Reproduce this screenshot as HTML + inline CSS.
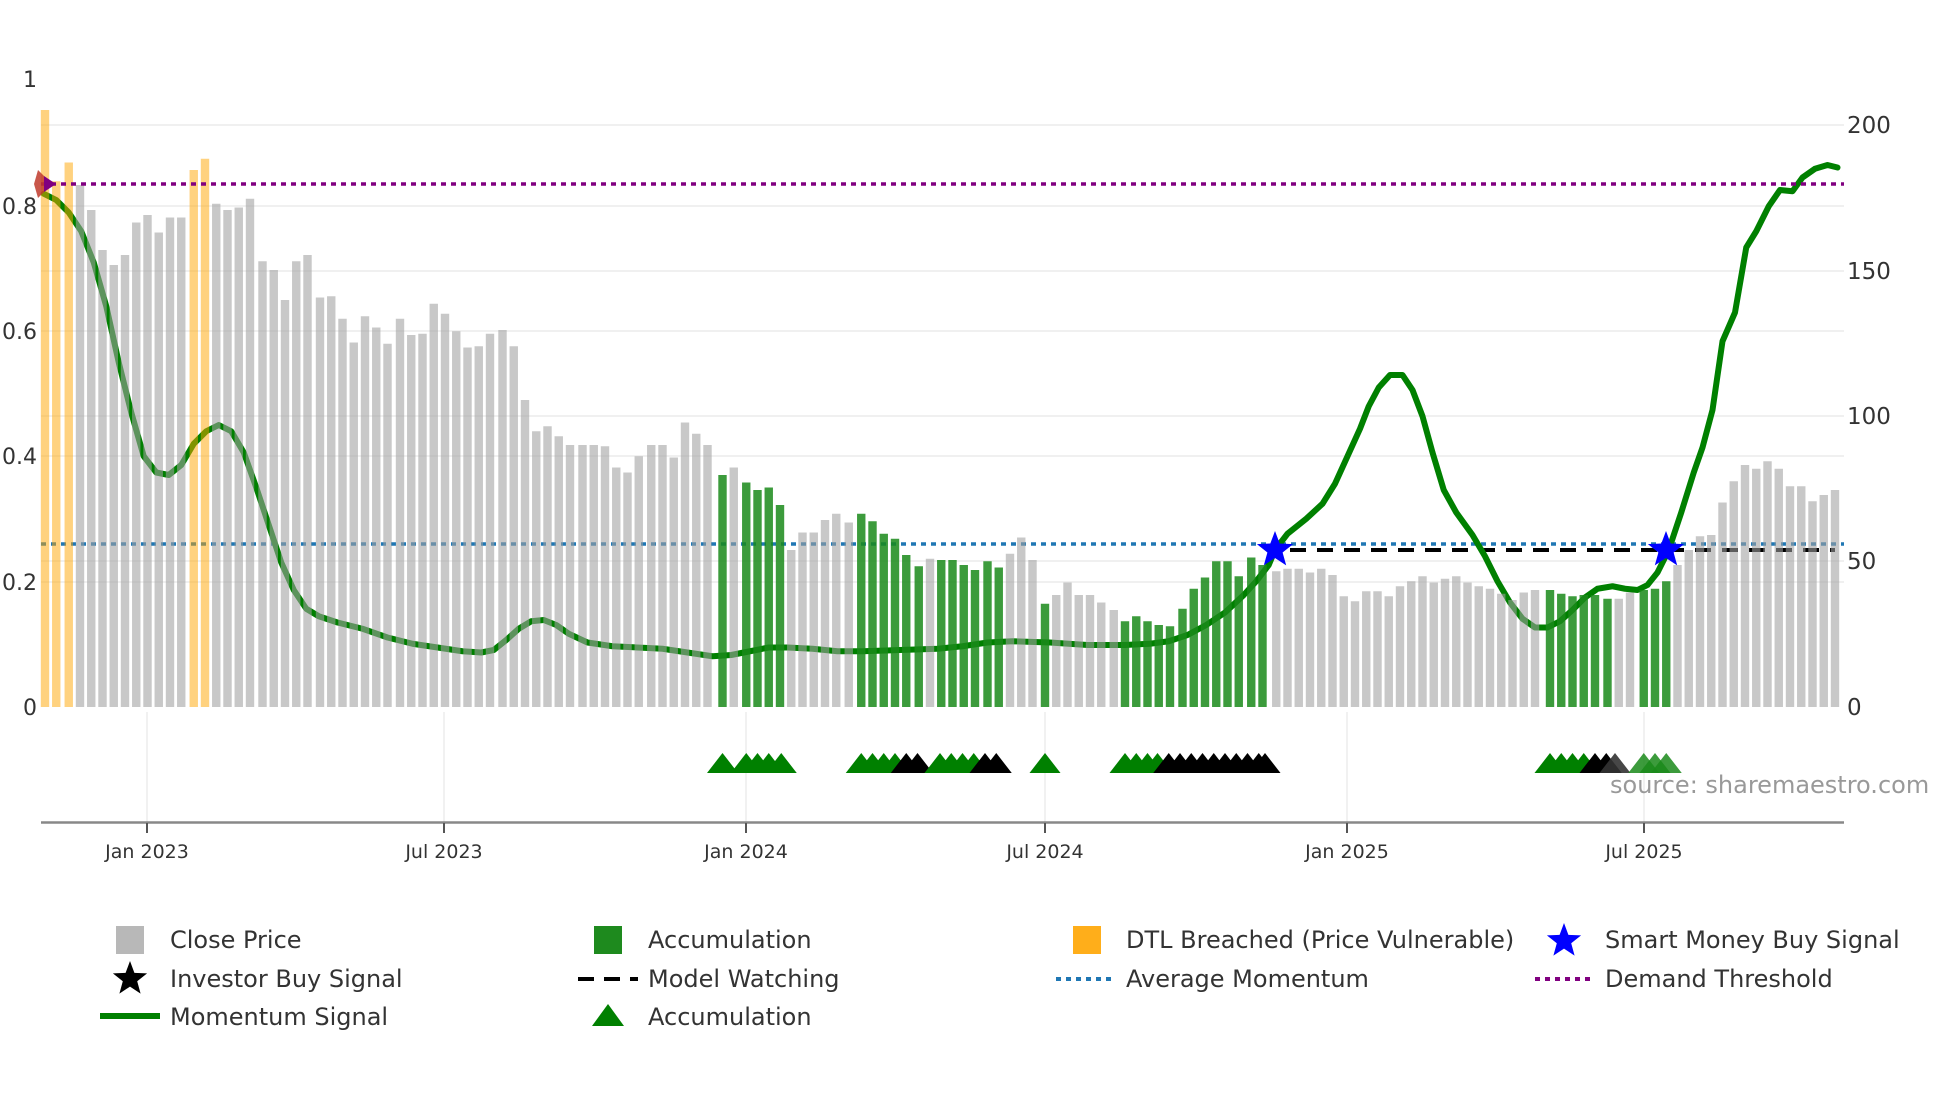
<!DOCTYPE html>
<html><head><meta charset="utf-8">
<style>
html,body{margin:0;padding:0;background:#fff;}
body{width:1960px;height:1102px;overflow:hidden;font-family:"DejaVu Sans","Liberation Sans",sans-serif;}
svg text{font-family:"DejaVu Sans","Liberation Sans",sans-serif;}
</style></head>
<body>
<svg id="s" width="1960" height="1102" viewBox="0 0 1960 1102" xmlns="http://www.w3.org/2000/svg">
<g stroke="#ececec" stroke-width="1.5">
<line x1="41" x2="1844" y1="206" y2="206"/><line x1="41" x2="1844" y1="331" y2="331"/>
<line x1="41" x2="1844" y1="456" y2="456"/><line x1="41" x2="1844" y1="582" y2="582"/>
<line x1="41" x2="1844" y1="125" y2="125"/><line x1="41" x2="1844" y1="271" y2="271"/>
<line x1="41" x2="1844" y1="416" y2="416"/><line x1="41" x2="1844" y1="561" y2="561"/>
<line x1="147" x2="147" y1="712" y2="822"/><line x1="444" x2="444" y1="712" y2="822"/>
<line x1="746" x2="746" y1="712" y2="822"/><line x1="1045" x2="1045" y1="712" y2="822"/>
<line x1="1347" x2="1347" y1="712" y2="822"/><line x1="1644" x2="1644" y1="712" y2="822"/>
</g>
<line x1="41" x2="1844" y1="544" y2="544" stroke="#1f77b4" stroke-width="3.5" stroke-dasharray="5,5"/>
<line x1="1290" x2="1835" y1="550" y2="550" stroke="#000" stroke-width="4" stroke-dasharray="16,11"/>
<g id="line"></g>
<g id="bars"></g>
<line x1="41" x2="1844" y1="184" y2="184" stroke="#800080" stroke-width="3.5" stroke-dasharray="5,5"/>
<g id="tri"></g>
<path d="M38 170 L46 178 L52 184 L46 190 L38 198 L34 184 Z" fill="#c0392b" opacity="0.85"/>
<path d="M44 176 L56 184 L44 192 Z" fill="#800080"/>
<g id="stars"></g>
<line x1="41" x2="1844" y1="822.5" y2="822.5" stroke="#888" stroke-width="2.5"/>
<g stroke="#555" stroke-width="2">
<line x1="147" x2="147" y1="823" y2="833"/><line x1="444" x2="444" y1="823" y2="833"/>
<line x1="746" x2="746" y1="823" y2="833"/><line x1="1045" x2="1045" y1="823" y2="833"/>
<line x1="1347" x2="1347" y1="823" y2="833"/><line x1="1644" x2="1644" y1="823" y2="833"/>
</g>
<g font-size="19" fill="#333" text-anchor="middle">
<text x="147" y="858">Jan 2023</text><text x="444" y="858">Jul 2023</text>
<text x="746" y="858">Jan 2024</text><text x="1045" y="858">Jul 2024</text>
<text x="1347" y="858">Jan 2025</text><text x="1644" y="858">Jul 2025</text>
</g>
<g font-size="22" fill="#333" text-anchor="end">
<text x="37" y="87">1</text><text x="37" y="214">0.8</text><text x="37" y="339">0.6</text>
<text x="37" y="464">0.4</text><text x="37" y="590">0.2</text><text x="37" y="715">0</text>
</g>
<g font-size="23" fill="#333">
<text x="1847" y="133">200</text><text x="1847" y="279">150</text><text x="1847" y="424">100</text>
<text x="1847" y="569">50</text><text x="1847" y="715">0</text>
</g>
<text x="1610" y="793" font-size="24" fill="#999">source: sharemaestro.com</text>
<!-- legend -->
<g font-size="24" fill="#333">
<rect x="116" y="926" width="28" height="28" fill="#b8b8b8"/><text x="170" y="948">Close Price</text>
<rect x="594" y="926" width="28" height="28" fill="#1e8a1e"/><text x="648" y="948">Accumulation</text>
<rect x="1073" y="926" width="28" height="28" fill="#ffae1a"/><text x="1126" y="948">DTL Breached (Price Vulnerable)</text>
<text x="1605" y="948">Smart Money Buy Signal</text>
<text x="170" y="987">Investor Buy Signal</text>
<line x1="578" x2="638" y1="979" y2="979" stroke="#000" stroke-width="4" stroke-dasharray="16,10"/><text x="648" y="987">Model Watching</text>
<line x1="1056" x2="1112" y1="979" y2="979" stroke="#1f77b4" stroke-width="4" stroke-dasharray="5,5"/><text x="1126" y="987">Average Momentum</text>
<line x1="1535" x2="1592" y1="979" y2="979" stroke="#800080" stroke-width="4" stroke-dasharray="5,5"/><text x="1605" y="987">Demand Threshold</text>
<line x1="100" x2="160" y1="1016" y2="1016" stroke="#008000" stroke-width="6"/><text x="170" y="1025">Momentum Signal</text>
<path d="M592 1026 L608 1004 L624 1026 Z" fill="#008000"/><text x="648" y="1025">Accumulation</text>
</g>
<g id="lstars"></g>
</svg>
<script>
var NS="http://www.w3.org/2000/svg";
function el(t,a,p){var e=document.createElementNS(NS,t);for(var k in a)e.setAttribute(k,a[k]);document.getElementById(p).appendChild(e);return e;}
var B=[[36,88,'o'],[45,145,'o'],[55,130,'o'],[64,148,'g'],[73,168,'g'],[82,200,'g'],[91,212,'g'],[100,204,'g'],[109,178,'g'],[118,172,'g'],[127,186,'g'],[136,174,'g'],[145,174,'g'],[155,136,'o'],[164,127,'o'],[173,163,'g'],[182,168,'g'],[191,166,'g'],[200,159,'g'],[210,209,'g'],[219,216,'g'],[228,240,'g'],[237,209,'g'],[246,204,'g'],[256,238,'g'],[265,237,'g'],[274,255,'g'],[283,274,'g'],[292,253,'g'],[301,262,'g'],[310,275,'g'],[320,255,'g'],[329,268,'g'],[338,267,'g'],[347,243,'g'],[356,251,'g'],[365,265,'g'],[374,278,'g'],[383,277,'g'],[392,267,'g'],[402,264,'g'],[411,277,'g'],[420,320,'g'],[429,345,'g'],[438,341,'g'],[447,349,'g'],[456,356,'g'],[466,356,'g'],[475,356,'g'],[484,357,'g'],[493,374,'g'],[502,378,'g'],[511,365,'g'],[521,356,'g'],[530,356,'g'],[539,366,'g'],[548,338,'g'],[557,347,'g'],[566,356,'g'],[578,380,'G'],[587,374,'g'],[597,386,'G'],[606,392,'G'],[615,390,'G'],[624,404,'G'],[633,440,'g'],[642,426,'g'],[651,426,'g'],[660,416,'g'],[669,411,'g'],[679,418,'g'],[689,411,'G'],[698,417,'G'],[707,427,'G'],[716,431,'G'],[725,444,'G'],[735,453,'G'],[744,447,'g'],[753,448,'G'],[762,448,'G'],[771,452,'G'],[780,456,'G'],[790,449,'G'],[799,454,'G'],[808,443,'g'],[817,430,'g'],[826,448,'g'],[836,483,'G'],[845,476,'g'],[854,466,'g'],[863,476,'g'],[872,476,'g'],[881,482,'g'],[891,488,'g'],[900,497,'G'],[909,493,'G'],[918,497,'G'],[927,500,'G'],[936,501,'G'],[946,487,'G'],[955,471,'G'],[964,462,'G'],[973,449,'G'],[982,449,'G'],[991,461,'G'],[1001,446,'G'],[1010,452,'G'],[1021,457,'g'],[1030,455,'g'],[1039,455,'g'],[1048,458,'g'],[1057,455,'g'],[1066,460,'g'],[1075,477,'g'],[1084,481,'g'],[1093,473,'g'],[1102,473,'g'],[1111,477,'g'],[1120,469,'g'],[1129,465,'g'],[1138,461,'g'],[1147,466,'g'],[1156,463,'g'],[1165,461,'g'],[1174,466,'g'],[1183,469,'g'],[1192,471,'g'],[1201,475,'g'],[1210,480,'g'],[1219,474,'g'],[1228,472,'g'],[1240,472,'G'],[1249,475,'G'],[1258,477,'G'],[1267,476,'G'],[1276,476,'G'],[1286,479,'G'],[1295,479,'g'],[1304,474,'g'],[1315,472,'G'],[1324,471,'G'],[1333,465,'G'],[1342,452,'g'],[1351,440,'g'],[1360,429,'g'],[1369,428,'g'],[1378,402,'g'],[1387,385,'g'],[1396,372,'g'],[1405,375,'g'],[1414,369,'g'],[1423,375,'g'],[1432,389,'g'],[1441,389,'g'],[1450,401,'g'],[1459,396,'g'],[1468,392,'g']];
var col={g:['#a0a0a0',0.58],G:['#1a8a1a',0.85],o:['#ffa500',0.5]};
B.forEach(function(b){var x=b[0]*1.25,t=b[1]*1.25;el('rect',{x:x-4.2,y:t,width:8.4,height:707-t,fill:col[b[2]][0],opacity:col[b[2]][1]},'bars');});
var L=[[35,155],[45,160],[55,170],[65,185],[75,210],[85,245],[95,290],[105,330],[115,365],[125,378],[135,380],[145,372],[155,355],[165,345],[175,340],[185,345],[195,362],[205,390],[215,420],[225,450],[235,472],[245,487],[255,493],[270,498],[290,503],[310,510],[330,515],[350,518],[370,521],[385,522],[395,520],[405,512],[415,503],[425,497],[435,496],[445,500],[455,507],[470,514],[490,517],[510,518],[530,519],[550,522],[570,525],[585,524],[600,521],[615,518],[630,518],[650,519],[670,521],[690,521],[720,520],[750,519],[770,517],[790,514],[810,513],[840,514],[870,516],[900,516],[920,515],[935,513],[950,508],[965,500],[980,490],[995,476],[1005,465],[1015,452],[1020,440],[1030,427],[1045,415],[1058,403],[1068,387],[1078,365],[1088,343],[1095,325],[1103,310],[1112,300],[1122,300],[1130,312],[1138,333],[1146,362],[1155,392],[1165,410],[1178,428],[1188,445],[1198,465],[1208,482],[1218,495],[1228,502],[1238,502],[1248,497],[1258,488],[1268,478],[1278,471],[1290,469],[1300,471],[1310,472],[1318,468],[1326,458],[1335,440],[1345,410],[1355,378],[1362,358],[1370,328],[1378,273],[1388,250],[1397,198],[1405,185],[1415,165],[1424,152],[1434,153],[1442,142],[1452,135],[1462,132],[1470,134]];
el('polyline',{points:L.map(function(p){return (p[0]*1.25)+','+(p[1]*1.25);}).join(' '),fill:'none',stroke:'#008000','stroke-width':6,'stroke-linejoin':'round','stroke-linecap':'round'},'line');
function tri(cx,c,op){el('path',{d:'M'+(cx-15.5)+' 773 L'+cx+' 753 L'+(cx+15.5)+' 773 Z',fill:c,opacity:op||1},'tri');}
var T=[[578,'G'],[597,'G'],[606,'G'],[615,'G'],[625,'G'],[689,'G'],[698,'G'],[707,'G'],[716,'G'],[725,'K'],[734,'K'],[752,'G'],[761,'G'],[770,'G'],[779,'G'],[788,'K'],[797,'K'],[836,'G'],[900,'G'],[909,'G'],[918,'G'],[926,'G'],[935,'K'],[944,'K'],[953,'K'],[962,'K'],[971,'K'],[980,'K'],[989,'K'],[998,'K'],[1007,'K'],[1012,'K'],[1240,'G'],[1249,'G'],[1258,'G'],[1267,'G'],[1276,'K'],[1285,'K'],[1292,'D'],[1315,'L'],[1324,'L'],[1333,'L']];
var tc={G:['#008000',1],K:['#000',1],D:['#333',0.9],L:['#1a8a1a',0.85]};
T.forEach(function(t){tri(t[0]*1.25,tc[t[1]][0],tc[t[1]][1]);});
function star(cx,cy,r,c,p){var s='';for(var i=0;i<10;i++){var a=-Math.PI/2+i*Math.PI/5,rr=i%2?r*0.42:r;s+=(i?'L':'M')+(cx+rr*Math.cos(a)).toFixed(1)+' '+(cy+rr*Math.sin(a)).toFixed(1);}el('path',{d:s+'Z',fill:c},p);}
star(1275,550,19,'#0000ff','stars');star(1666,550,19,'#0000ff','stars');
star(1564,941,18,'#0000ff','lstars');star(130,979,18,'#000','lstars');
</script>
</body></html>
